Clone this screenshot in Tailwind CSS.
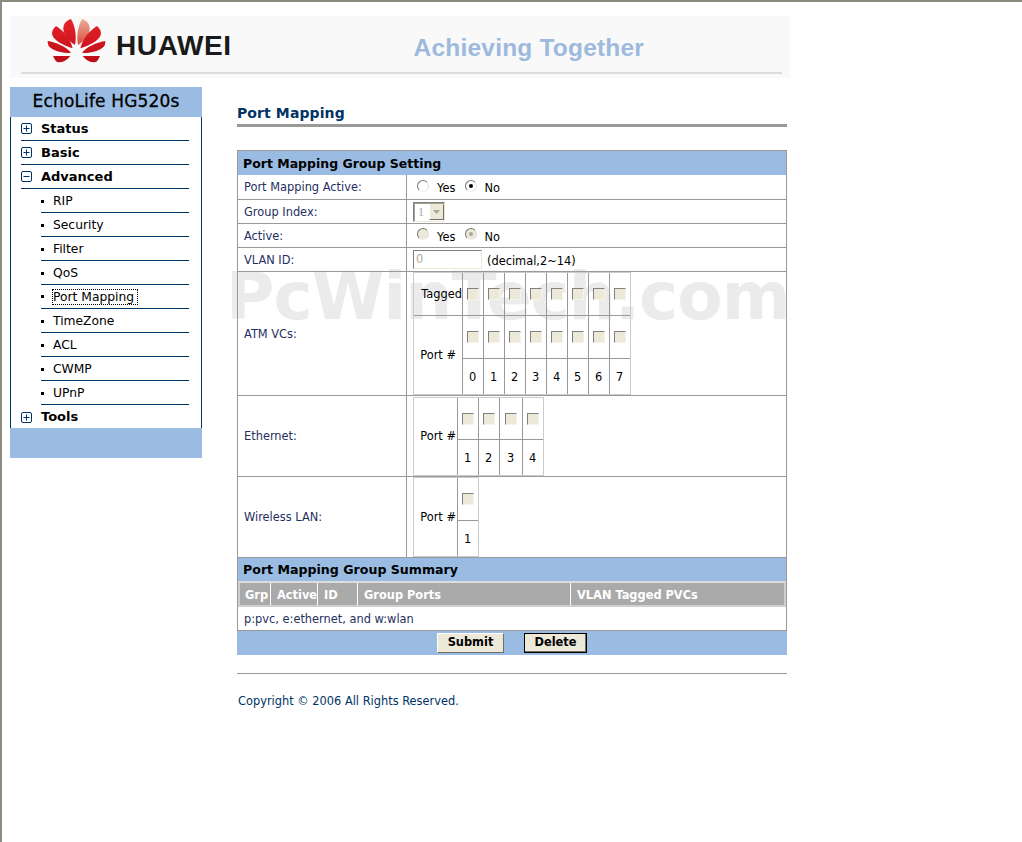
<!DOCTYPE html>
<html lang="en">
<head>
    <meta charset="UTF-8">
    <title>EchoLife HG520s - Port Mapping</title>
    <script src="https://cdn.jsdelivr.net/npm/@tailwindcss/browser@4"></script>
</head>
<body class="bg-white">
<div class="relative h-[842px] w-[1022px] overflow-hidden border-t-2 border-l-2 border-[#8c8b7f] pt-[14px] pl-[8px] font-['DejaVu_Sans',sans-serif] text-[11.4px] text-[#1f2f5f]">

    <!-- Banner -->
    <div class="h-[62px] w-[780px] bg-[#f9f9f9] pl-[11px] pr-[8px]">
        <div class="flex h-[58px] items-start border-b-2 border-[#dddddd]">
            <svg class="ml-[26px] mt-[1px] h-[46px] w-[60px]" viewBox="20 20 180 138">
                <defs>
                    <linearGradient id="petal" gradientUnits="userSpaceOnUse" x1="0" y1="26" x2="0" y2="156">
                        <stop offset="0" stop-color="#e8222a"/>
                        <stop offset="1" stop-color="#bc0d18"/>
                    </linearGradient>
                    <linearGradient id="palePetal" gradientUnits="userSpaceOnUse" x1="0" y1="26" x2="0" y2="104">
                        <stop offset="0" stop-color="#ecab98"/>
                        <stop offset="1" stop-color="#d8503f"/>
                    </linearGradient>
                </defs>
                <g fill="url(#petal)">
                    <path d="M104 104C82 90 64 66 70 46C73 36 82 29 92 26C103 44 110 76 104 104Z"/>
                    <path d="M97 114C72 106 42 92 36 74C33 64 39 54 47 47C68 60 90 84 97 114Z"/>
                    <path d="M92 127C66 130 38 122 26 108C23 104 22 98 22 92C46 96 76 108 92 127Z"/>
                    <path d="M38 137L90 137C80 150 66 157 54 156C47 155 42 147 38 137Z"/>
                </g>
                <g fill="url(#petal)" transform="matrix(-1 0 0 1 217 0)">
                    <path d="M104 104C82 90 64 66 70 46C73 36 82 29 92 26C103 44 110 76 104 104Z" fill="url(#palePetal)"/>
                    <path d="M97 114C72 106 42 92 36 74C33 64 39 54 47 47C68 60 90 84 97 114Z"/>
                    <path d="M92 127C66 130 38 122 26 108C23 104 22 98 22 92C46 96 76 108 92 127Z"/>
                    <path d="M38 137L90 137C80 150 66 157 54 156C47 155 42 147 38 137Z"/>
                </g>
            </svg>
            <span class="ml-[9px] mt-[16px] font-['Liberation_Sans',sans-serif] text-[28px] leading-[28px] font-bold tracking-[0.6px] text-[#1a1a1a]">HUAWEI</span>
            <span class="ml-[182px] mt-[20px] font-['Liberation_Sans',sans-serif] text-[24.5px] leading-[24px] font-bold tracking-[0.2px] text-[#9db9dd]">Achieving Together</span>
        </div>
    </div>

    <div class="mt-[9px] flex items-start">
        <!-- Sidebar -->
        <div class="w-[192px]">
            <div class="flex h-[30px] items-center justify-center bg-[#9bbce2] text-[17px] tracking-[0.15px] text-black [-webkit-text-stroke:0.3px_black]">EchoLife HG520s</div>
            <ul class="h-[311px] border-x border-[#003366] text-black">
                <li class="ml-[10px] mr-[12px] flex h-[24px] items-center border-b border-[#003366] text-[13px] font-bold">
                    <span class="flex h-[11px] w-[11px] items-center justify-center rounded-[2px] border border-[#003366] text-[#003366]"><svg class="h-[9px] w-[9px]" viewBox="0 0 9 9"><path d="M1.5 4.5h6M4.5 1.5v6" stroke="currentColor"/></svg></span>
                    <span class="ml-[9px]">Status</span>
                </li>
                <li class="ml-[10px] mr-[12px] flex h-[24px] items-center border-b border-[#003366] text-[13px] font-bold">
                    <span class="flex h-[11px] w-[11px] items-center justify-center rounded-[2px] border border-[#003366] text-[#003366]"><svg class="h-[9px] w-[9px]" viewBox="0 0 9 9"><path d="M1.5 4.5h6M4.5 1.5v6" stroke="currentColor"/></svg></span>
                    <span class="ml-[9px]">Basic</span>
                </li>
                <li class="ml-[10px] mr-[12px] flex h-[24px] items-center border-b border-[#003366] text-[13px] font-bold">
                    <span class="flex h-[11px] w-[11px] items-center justify-center rounded-[2px] border border-[#003366] text-[#003366]"><svg class="h-[9px] w-[9px]" viewBox="0 0 9 9"><path d="M1.5 4.5h6" stroke="currentColor"/></svg></span>
                    <span class="ml-[9px]">Advanced</span>
                </li>
                <li class="ml-[30px] mr-[12px] flex h-[24px] items-center border-b border-[#003366] pt-[2px] text-[12.3px]"><span class="h-[3px] w-[3px] bg-black"></span><span class="ml-[9px]">RIP</span></li>
                <li class="ml-[30px] mr-[12px] flex h-[24px] items-center border-b border-[#003366] pt-[2px] text-[12.3px]"><span class="h-[3px] w-[3px] bg-black"></span><span class="ml-[9px]">Security</span></li>
                <li class="ml-[30px] mr-[12px] flex h-[24px] items-center border-b border-[#003366] pt-[2px] text-[12.3px]"><span class="h-[3px] w-[3px] bg-black"></span><span class="ml-[9px]">Filter</span></li>
                <li class="ml-[30px] mr-[12px] flex h-[24px] items-center border-b border-[#003366] pt-[2px] text-[12.3px]"><span class="h-[3px] w-[3px] bg-black"></span><span class="ml-[9px]">QoS</span></li>
                <li class="ml-[30px] mr-[12px] flex h-[24px] items-center border-b border-[#003366] text-[12.3px]"><span class="h-[3px] w-[3px] bg-black"></span><span class="ml-[9px] pr-[3px] leading-[14px] outline-1 outline-dotted outline-black">Port Mapping</span></li>
                <li class="ml-[30px] mr-[12px] flex h-[24px] items-center border-b border-[#003366] pt-[2px] text-[12.3px]"><span class="h-[3px] w-[3px] bg-black"></span><span class="ml-[9px]">TimeZone</span></li>
                <li class="ml-[30px] mr-[12px] flex h-[24px] items-center border-b border-[#003366] pt-[2px] text-[12.3px]"><span class="h-[3px] w-[3px] bg-black"></span><span class="ml-[9px]">ACL</span></li>
                <li class="ml-[30px] mr-[12px] flex h-[24px] items-center border-b border-[#003366] pt-[2px] text-[12.3px]"><span class="h-[3px] w-[3px] bg-black"></span><span class="ml-[9px]">CWMP</span></li>
                <li class="ml-[30px] mr-[12px] flex h-[24px] items-center border-b border-[#003366] pt-[2px] text-[12.3px]"><span class="h-[3px] w-[3px] bg-black"></span><span class="ml-[9px]">UPnP</span></li>
                <li class="ml-[10px] mr-[12px] flex h-[24px] items-center text-[13px] font-bold">
                    <span class="flex h-[11px] w-[11px] items-center justify-center rounded-[2px] border border-[#003366] text-[#003366]"><svg class="h-[9px] w-[9px]" viewBox="0 0 9 9"><path d="M1.5 4.5h6M4.5 1.5v6" stroke="currentColor"/></svg></span>
                    <span class="ml-[9px]">Tools</span>
                </li>
            </ul>
            <div class="h-[30px] bg-[#9bbce2]"></div>
        </div>

        <!-- Main -->
        <div class="relative ml-[35px] w-[550px]">
            <!-- Watermark sits behind the form, the table lines cross it -->
            <div class="pointer-events-none absolute top-[175px] left-[-11px] font-['DejaVu_Sans',sans-serif] text-[66px] leading-[70px] font-bold tracking-[-0.9px] whitespace-nowrap text-[#ebebeb]">PcWinTech.com</div>

            <h1 class="relative flex h-[40px] items-end border-b-[3px] border-[#999999] text-[14px] font-bold tracking-[0.1px] text-[#003366]">Port Mapping</h1>

            <div class="relative mt-[23px] border-x border-t border-[#999999]">
                <div class="flex h-[24px] items-center bg-[#9bbce2] pl-[5px] pt-[2px] text-[12.5px] font-bold text-black">Port Mapping Group Setting</div>

                <div class="flex h-[25px] border-b border-[#999999]">
                    <div class="flex w-[169px] items-center border-r border-[#999999] pl-[6px] pt-[2px]">Port Mapping Active:</div>
                    <div class="flex items-center pl-[10px] text-black">
                        <span class="mt-[-2px] flex h-[12px] w-[12px] items-center justify-center rounded-full border border-t-[#777777] border-r-[#dddddd] border-b-[#eeeeee] border-l-[#777777] bg-white"></span>
                        <span class="ml-[8px] mt-[3px]">Yes</span>
                        <span class="ml-[10px] mt-[-2px] flex h-[12px] w-[12px] items-center justify-center rounded-full border border-t-[#777777] border-r-[#dddddd] border-b-[#eeeeee] border-l-[#777777] bg-white"><span class="h-[4px] w-[4px] rounded-full bg-black"></span></span>
                        <span class="ml-[7px] mt-[3px]">No</span>
                    </div>
                </div>
                <div class="flex h-[24px] border-b border-[#999999]">
                    <div class="flex w-[169px] items-center border-r border-[#999999] pl-[6px] pt-[2px]">Group Index:</div>
                    <div class="flex items-center pl-[6px]">
                        <div class="flex h-[20px] w-[32px] border border-t-[#808080] border-r-[#ece9d8] border-b-[#ece9d8] border-l-[#808080] bg-white shadow-[inset_1px_1px_0_#a5a292]">
                            <span class="w-[15px] pl-[4px] font-['Liberation_Serif',serif] text-[12px] leading-[18px] text-[#aca899]">1</span>
                            <span class="mt-[1px] mb-[1px] flex w-[15px] items-center justify-center border border-t-[#ece9d8] border-r-[#716f64] border-b-[#716f64] border-l-[#ffffff] bg-[#ece9d8]"><svg class="h-[4px] w-[7px]" viewBox="0 0 7 4"><path d="M0 0h7L3.5 4z" fill="#aca899"/></svg></span>
                        </div>
                    </div>
                </div>
                <div class="flex h-[24px] border-b border-[#999999]">
                    <div class="flex w-[169px] items-center border-r border-[#999999] pl-[6px] pt-[2px]">Active:</div>
                    <div class="flex items-center pl-[10px] text-black">
                        <span class="mt-[-3px] flex h-[12px] w-[12px] items-center justify-center rounded-full border border-t-[#777777] border-r-[#dddddd] border-b-[#eeeeee] border-l-[#777777] bg-[#ece9d8]"></span>
                        <span class="ml-[8px] mt-[4px]">Yes</span>
                        <span class="ml-[10px] mt-[-3px] flex h-[12px] w-[12px] items-center justify-center rounded-full border border-t-[#777777] border-r-[#dddddd] border-b-[#eeeeee] border-l-[#777777] bg-[#ece9d8]"><span class="h-[4px] w-[4px] rounded-full bg-[#aca899]"></span></span>
                        <span class="ml-[7px] mt-[4px]">No</span>
                    </div>
                </div>
                <div class="flex h-[24px] border-b border-[#999999]">
                    <div class="flex w-[169px] items-center border-r border-[#999999] pl-[6px] pt-[2px]">VLAN ID:</div>
                    <div class="flex items-center pl-[6px] text-black">
                        <span class="h-[19px] w-[69px] border border-t-[#808080] border-r-[#ece9d8] border-b-[#ece9d8] border-l-[#808080] pl-[2px] leading-[16px] text-[#aca899]">0</span>
                        <span class="ml-[5px] mt-[4px]">(decimal,2~14)</span>
                    </div>
                </div>

                <!-- ATM VCs -->
                <div class="flex h-[124px] border-b border-[#999999]">
                    <div class="flex w-[169px] items-center border-r border-[#999999] pl-[6px] pt-[2px]">ATM VCs:</div>
                    <div class="pl-[6px]">
                        <div class="grid h-[123px] w-[218px] grid-cols-[48px_repeat(8,21px)] grid-rows-[43px_43px_35px] border border-[#cccccc] text-black">
                            <div class="flex items-center justify-end border-b border-[#999999] pt-[2px]">Tagged</div>
                            <div class="flex items-center justify-center border-b border-l border-[#999999] pr-[1px]"><span class="h-[12px] w-[12px] border border-t-[#808080] border-r-[#f5f3ea] border-b-[#f5f3ea] border-l-[#808080] bg-[#ece9d8]"></span></div>
                            <div class="flex items-center justify-center border-b border-l border-[#999999] pr-[1px]"><span class="h-[12px] w-[12px] border border-t-[#808080] border-r-[#f5f3ea] border-b-[#f5f3ea] border-l-[#808080] bg-[#ece9d8]"></span></div>
                            <div class="flex items-center justify-center border-b border-l border-[#999999] pr-[1px]"><span class="h-[12px] w-[12px] border border-t-[#808080] border-r-[#f5f3ea] border-b-[#f5f3ea] border-l-[#808080] bg-[#ece9d8]"></span></div>
                            <div class="flex items-center justify-center border-b border-l border-[#999999] pr-[1px]"><span class="h-[12px] w-[12px] border border-t-[#808080] border-r-[#f5f3ea] border-b-[#f5f3ea] border-l-[#808080] bg-[#ece9d8]"></span></div>
                            <div class="flex items-center justify-center border-b border-l border-[#999999] pr-[1px]"><span class="h-[12px] w-[12px] border border-t-[#808080] border-r-[#f5f3ea] border-b-[#f5f3ea] border-l-[#808080] bg-[#ece9d8]"></span></div>
                            <div class="flex items-center justify-center border-b border-l border-[#999999] pr-[1px]"><span class="h-[12px] w-[12px] border border-t-[#808080] border-r-[#f5f3ea] border-b-[#f5f3ea] border-l-[#808080] bg-[#ece9d8]"></span></div>
                            <div class="flex items-center justify-center border-b border-l border-[#999999] pr-[1px]"><span class="h-[12px] w-[12px] border border-t-[#808080] border-r-[#f5f3ea] border-b-[#f5f3ea] border-l-[#808080] bg-[#ece9d8]"></span></div>
                            <div class="flex items-center justify-center border-b border-l border-[#999999] pr-[1px]"><span class="h-[12px] w-[12px] border border-t-[#808080] border-r-[#f5f3ea] border-b-[#f5f3ea] border-l-[#808080] bg-[#ece9d8]"></span></div>

                            <div class="row-span-2 flex items-center justify-end pr-[6px] pt-[2px]">Port #</div>
                            <div class="flex items-center justify-center border-b border-l border-[#999999] pr-[1px]"><span class="h-[12px] w-[12px] border border-t-[#808080] border-r-[#f5f3ea] border-b-[#f5f3ea] border-l-[#808080] bg-[#ece9d8]"></span></div>
                            <div class="flex items-center justify-center border-b border-l border-[#999999] pr-[1px]"><span class="h-[12px] w-[12px] border border-t-[#808080] border-r-[#f5f3ea] border-b-[#f5f3ea] border-l-[#808080] bg-[#ece9d8]"></span></div>
                            <div class="flex items-center justify-center border-b border-l border-[#999999] pr-[1px]"><span class="h-[12px] w-[12px] border border-t-[#808080] border-r-[#f5f3ea] border-b-[#f5f3ea] border-l-[#808080] bg-[#ece9d8]"></span></div>
                            <div class="flex items-center justify-center border-b border-l border-[#999999] pr-[1px]"><span class="h-[12px] w-[12px] border border-t-[#808080] border-r-[#f5f3ea] border-b-[#f5f3ea] border-l-[#808080] bg-[#ece9d8]"></span></div>
                            <div class="flex items-center justify-center border-b border-l border-[#999999] pr-[1px]"><span class="h-[12px] w-[12px] border border-t-[#808080] border-r-[#f5f3ea] border-b-[#f5f3ea] border-l-[#808080] bg-[#ece9d8]"></span></div>
                            <div class="flex items-center justify-center border-b border-l border-[#999999] pr-[1px]"><span class="h-[12px] w-[12px] border border-t-[#808080] border-r-[#f5f3ea] border-b-[#f5f3ea] border-l-[#808080] bg-[#ece9d8]"></span></div>
                            <div class="flex items-center justify-center border-b border-l border-[#999999] pr-[1px]"><span class="h-[12px] w-[12px] border border-t-[#808080] border-r-[#f5f3ea] border-b-[#f5f3ea] border-l-[#808080] bg-[#ece9d8]"></span></div>
                            <div class="flex items-center justify-center border-b border-l border-[#999999] pr-[1px]"><span class="h-[12px] w-[12px] border border-t-[#808080] border-r-[#f5f3ea] border-b-[#f5f3ea] border-l-[#808080] bg-[#ece9d8]"></span></div>

                            <div class="flex items-center justify-center border-l border-[#999999] pr-[1px] pt-[3px]">0</div>
                            <div class="flex items-center justify-center border-l border-[#999999] pr-[1px] pt-[3px]">1</div>
                            <div class="flex items-center justify-center border-l border-[#999999] pr-[1px] pt-[3px]">2</div>
                            <div class="flex items-center justify-center border-l border-[#999999] pr-[1px] pt-[3px]">3</div>
                            <div class="flex items-center justify-center border-l border-[#999999] pr-[1px] pt-[3px]">4</div>
                            <div class="flex items-center justify-center border-l border-[#999999] pr-[1px] pt-[3px]">5</div>
                            <div class="flex items-center justify-center border-l border-[#999999] pr-[1px] pt-[3px]">6</div>
                            <div class="flex items-center justify-center border-l border-[#999999] pr-[1px] pt-[3px]">7</div>
                        </div>
                    </div>
                </div>

                <!-- Ethernet -->
                <div class="flex h-[81px] border-b border-[#999999]">
                    <div class="flex w-[169px] items-center border-r border-[#999999] pl-[6px] pt-[2px]">Ethernet:</div>
                    <div class="pl-[6px] pt-px">
                        <div class="grid h-[79px] w-[131px] grid-cols-[43px_21px_21px_23px_21px] grid-rows-[42px_35px] border border-[#cccccc] text-black">
                            <div class="row-span-2 flex items-center justify-end pr-[1px]">Port #</div>
                            <div class="flex items-center justify-center border-b border-l border-[#999999] pr-[1px]"><span class="h-[12px] w-[12px] border border-t-[#808080] border-r-[#f5f3ea] border-b-[#f5f3ea] border-l-[#808080] bg-[#ece9d8]"></span></div>
                            <div class="flex items-center justify-center border-b border-l border-[#999999] pr-[1px]"><span class="h-[12px] w-[12px] border border-t-[#808080] border-r-[#f5f3ea] border-b-[#f5f3ea] border-l-[#808080] bg-[#ece9d8]"></span></div>
                            <div class="flex items-center justify-center border-b border-l border-[#999999] pr-[1px]"><span class="h-[12px] w-[12px] border border-t-[#808080] border-r-[#f5f3ea] border-b-[#f5f3ea] border-l-[#808080] bg-[#ece9d8]"></span></div>
                            <div class="flex items-center justify-center border-b border-l border-[#999999] pr-[1px]"><span class="h-[12px] w-[12px] border border-t-[#808080] border-r-[#f5f3ea] border-b-[#f5f3ea] border-l-[#808080] bg-[#ece9d8]"></span></div>
                            <div class="flex items-center justify-center border-l border-[#999999] pr-[1px] pt-[2px]">1</div>
                            <div class="flex items-center justify-center border-l border-[#999999] pr-[1px] pt-[2px]">2</div>
                            <div class="flex items-center justify-center border-l border-[#999999] pr-[1px] pt-[2px]">3</div>
                            <div class="flex items-center justify-center border-l border-[#999999] pr-[1px] pt-[2px]">4</div>
                        </div>
                    </div>
                </div>

                <!-- Wireless LAN -->
                <div class="flex h-[81px] border-b border-[#999999]">
                    <div class="flex w-[169px] items-center border-r border-[#999999] pl-[6px] pt-[2px]">Wireless LAN:</div>
                    <div class="pl-[6px]">
                        <div class="grid h-[80px] w-[66px] grid-cols-[43px_21px] grid-rows-[43px_35px] border border-[#cccccc] text-black">
                            <div class="row-span-2 flex items-center justify-end pr-[1px] pt-[2px]">Port #</div>
                            <div class="flex items-center justify-center border-b border-l border-[#999999] pr-[1px]"><span class="h-[12px] w-[12px] border border-t-[#808080] border-r-[#f5f3ea] border-b-[#f5f3ea] border-l-[#808080] bg-[#ece9d8]"></span></div>
                            <div class="flex items-center justify-center border-l border-[#999999] pr-[1px] pt-[2px]">1</div>
                        </div>
                    </div>
                </div>

                <!-- Summary -->
                <div class="flex h-[23px] items-center bg-[#9bbce2] pl-[5px] pt-[2px] text-[12.6px] font-bold text-black">Port Mapping Group Summary</div>
                <div class="flex h-[26px] border-2 border-[#cfcfcf] border-t-[#dddddd] bg-[#aaaaaa] font-bold text-white">
                    <div class="flex w-[31px] items-center border-r border-white pl-[5px] pt-[3px]">Grp</div>
                    <div class="flex w-[47px] items-center border-r border-white pl-[6px] pt-[3px]">Active</div>
                    <div class="flex w-[40px] items-center border-r border-white pl-[6px] pt-[3px]">ID</div>
                    <div class="flex w-[213px] items-center border-r border-white pl-[6px] pt-[3px]">Group Ports</div>
                    <div class="flex flex-1 items-center pl-[6px] pt-[3px]">VLAN Tagged PVCs</div>
                </div>
                <div class="flex h-[24px] items-center border-b border-[#999999] pl-[6px] pt-[2px]">p:pvc, e:ethernet, and w:wlan</div>
            </div>
            <div class="relative flex h-[24px] items-center justify-center bg-[#9bbce2]">
                <span class="flex h-[20px] w-[67px] items-center justify-center border border-t-white border-r-[#716f64] border-b-[#716f64] border-l-white bg-[#ece9d8] font-bold text-black">Submit</span>
                <span class="ml-[20px] flex h-[20px] w-[63px] items-center justify-center border border-black bg-[#ece9d8] font-bold text-black shadow-[inset_-1px_-1px_0_#716f64]">Delete</span>
            </div>

            <div class="mt-[18px] border-t border-[#999999] pt-[19px] pl-px text-[#003366]">Copyright © 2006 All Rights Reserved.</div>
        </div>
    </div>
</div>
</body>
</html>
